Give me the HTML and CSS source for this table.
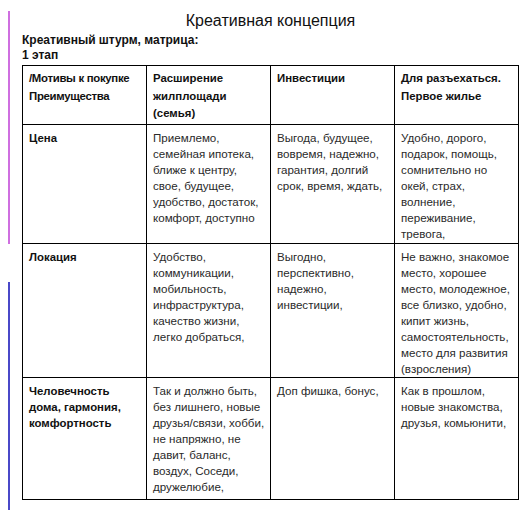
FILE: index.html
```html
<!DOCTYPE html>
<html lang="ru">
<head>
<meta charset="utf-8">
<link rel="stylesheet" href="styles.css">
</head>
<body>
<div class="page">
  <span class="marker marker-pink"></span>
  <span class="marker marker-blue"></span>
  <h1 class="title">Креативная концепция</h1>
  <p class="subtitle">Креативный штурм, матрица:<br>1 этап</p>
  <table class="matrix">
    <colgroup>
      <col class="c"><col class="c"><col class="c"><col class="c">
    </colgroup>
    <tr class="row-head">
      <th>/Мотивы к покупке<br>Преимущества</th>
      <th>Расширение<br>жилплощади<br>(семья)</th>
      <th>Инвестиции</th>
      <th>Для разъехаться.<br>Первое жилье</th>
    </tr>
    <tr class="row-1">
      <th>Цена</th>
      <td>Приемлемо,<br>семейная ипотека,<br>ближе к центру,<br>свое, будущее,<br>удобство, достаток,<br>комфорт, доступно</td>
      <td>Выгода, будущее,<br>вовремя, надежно,<br>гарантия, долгий<br>срок, время, ждать,</td>
      <td>Удобно, дорого,<br>подарок, помощь,<br>сомнительно но<br>окей, страх,<br>волнение,<br>переживание,<br>тревога,</td>
    </tr>
    <tr class="row-2">
      <th>Локация</th>
      <td>Удобство,<br>коммуникации,<br>мобильность,<br>инфраструктура,<br>качество жизни,<br>легко добраться,</td>
      <td>Выгодно,<br>перспективно,<br>надежно,<br>инвестиции,</td>
      <td>Не важно, знакомое<br>место, хорошее<br>место, молодежное,<br>все близко, удобно,<br>кипит жизнь,<br>самостоятельность,<br>место для развития<br>(взросления)</td>
    </tr>
    <tr class="row-3">
      <th>Человечность<br>дома, гармония,<br>комфортность</th>
      <td>Так и должно быть,<br>без лишнего, новые<br>друзья/связи, хобби,<br>не напряжно, не<br>давит, баланс,<br>воздух, Соседи,<br>дружелюбие,</td>
      <td>Доп фишка, бонус,</td>
      <td>Как в прошлом,<br>новые знакомства,<br>друзья, комьюнити,</td>
    </tr>
  </table>
</div>
</body>
</html>
```
FILE: styles.css
```css
html, body {
  margin: 0;
  padding: 0;
  background: #fff;
}
body {
  font-family: "Liberation Sans", Arial, sans-serif;
  color: #000;
}
.page {
  position: relative;
  width: 532px;
  height: 510px;
  padding: 11px 0 0 22px;
  box-sizing: border-box;
  overflow: hidden;
}
.marker {
  position: absolute;
  left: 8px;
  width: 2px;
}
.marker-pink {
  top: 11px;
  height: 233px;
  background: #cf6fe0;
}
.marker-blue {
  top: 282px;
  height: 228px;
  background: #4a48c8;
}
.title {
  margin: 0;
  font-size: 16px;
  font-weight: normal;
  line-height: 19px;
  text-align: center;
  width: 497px;
  color: #111;
}
.subtitle {
  margin: 3px 0 0;
  font-size: 12px;
  font-weight: bold;
  line-height: 15px;
  color: #111;
}
.matrix {
  margin-top: 2px;
  border-collapse: collapse;
  table-layout: fixed;
  width: 497px;
}
.matrix .c {
  width: 124px;
}
.matrix th,
.matrix td {
  border: 1px solid #000;
  vertical-align: top;
  text-align: left;
  font-size: 11.6px;
  white-space: nowrap;
  padding: 5px 4px 0 6px;
  color: #2a2a2a;
  line-height: 16px;
}
.matrix th {
  font-weight: bold;
  font-size: 11.4px;
  color: #111;
}
.row-head th {
  line-height: 17.5px;
  padding-top: 4px;
}
.row-head th:first-child {
  letter-spacing: -0.3px;
}
.row-head th { height: 54px; }
.row-1 > * { height: 113px; }
.row-2 > * { height: 127px; }
.row-3 > * { height: 116px; }
```
